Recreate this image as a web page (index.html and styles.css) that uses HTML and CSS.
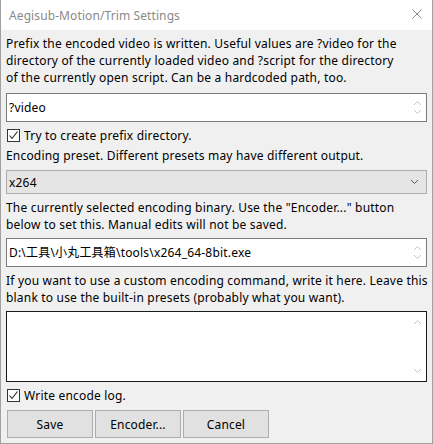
FILE: index.html
```html
<!DOCTYPE html>
<html>
<head>
<meta charset="utf-8">
<link rel="stylesheet" href="styles.css">
</head>
<body>
<div class="window">
  <div class="titlebar">
    <span class="title">Aegisub-Motion/Trim Settings</span>
    <svg class="close" width="10" height="10" viewBox="0 0 10 10"><path d="M0.5 0.5L9.5 9.5M9.5 0.5L0.5 9.5" stroke="#8a8a8a" stroke-width="1" fill="none"/></svg>
  </div>
  <div class="content">
    <p class="label l1">Prefix the encoded video is written. Useful values are ?video for the<br>directory of the currently loaded video and ?script for the directory<br>of the currently open script. Can be a hardcoded path, too.</p>
    <div class="textbox tb1">
      <span class="tbtext">?video</span>
      <div class="spin">
        <svg width="9" height="6" viewBox="0 0 9 6"><path d="M1 5L4.5 1.5L8 5" stroke="#c4c4c4" fill="none"/></svg>
        <svg width="9" height="6" viewBox="0 0 9 6"><path d="M1 1L4.5 4.5L8 1" stroke="#c4c4c4" fill="none"/></svg>
      </div>
    </div>
    <label class="check c1"><span class="box"><svg width="11" height="11" viewBox="0 0 11 11"><path d="M1.5 5.5L4 8.5L9.5 1.5" stroke="#222" stroke-width="1.1" fill="none"/></svg></span>Try to create prefix directory.</label>
    <p class="label l2">Encoding preset. Different presets may have different output.</p>
    <div class="combo">
      <span class="tbtext">x264</span>
      <svg class="chev" width="9" height="6" viewBox="0 0 9 6"><path d="M1 1L4.5 4.5L8 1" stroke="#5a5a5a" fill="none"/></svg>
    </div>
    <p class="label l3">The currently selected encoding binary. Use the "Encoder..." button<br>below to set this. Manual edits will not be saved.</p>
    <div class="textbox tb2">
      <span class="tbtext">D:\工具\小丸工具箱\tools\x264_64-8bit.exe</span>
      <div class="spin">
        <svg width="9" height="6" viewBox="0 0 9 6"><path d="M1 5L4.5 1.5L8 5" stroke="#c4c4c4" fill="none"/></svg>
        <svg width="9" height="6" viewBox="0 0 9 6"><path d="M1 1L4.5 4.5L8 1" stroke="#c4c4c4" fill="none"/></svg>
      </div>
    </div>
    <p class="label l4">If you want to use a custom encoding command, write it here. Leave this<br>blank to use the built-in presets (probably what you want).</p>
    <div class="textbox tb3">
      <div class="spin tall">
        <svg width="9" height="6" viewBox="0 0 9 6"><path d="M1 5L4.5 1.5L8 5" stroke="#c4c4c4" fill="none"/></svg>
        <svg width="9" height="6" viewBox="0 0 9 6"><path d="M1 1L4.5 4.5L8 1" stroke="#c4c4c4" fill="none"/></svg>
      </div>
    </div>
    <label class="check c2"><span class="box"><svg width="11" height="11" viewBox="0 0 11 11"><path d="M1.5 5.5L4 8.5L9.5 1.5" stroke="#222" stroke-width="1.1" fill="none"/></svg></span>Write encode log.</label>
    <div class="buttons">
      <button class="btn">Save</button>
      <button class="btn">Encoder...</button>
      <button class="btn">Cancel</button>
    </div>
  </div>
</div>
</body>
</html>
```
FILE: styles.css
```css
html, body {
  margin: 0;
  padding: 0;
  background: #f0f0f0;
}
.window {
  width: 433px;
  height: 444px;
  box-sizing: border-box;
  border: 1px solid #a0a0a0;
  border-top: none;
  background: #f0f0f0;
  display: flex;
  flex-direction: column;
  font-family: "Noto Sans", "Noto Sans CJK SC", sans-serif;
  font-size: 12px;
  letter-spacing: 0.19px;
  color: #000;
}
.titlebar {
  height: 30px;
  background: #fff;
  display: flex;
  align-items: center;
  justify-content: space-between;
  padding: 0 10px 0 8px;
  flex-shrink: 0;
}
.title {
  color: #8a8a8a;
  font-size: 12px;
  letter-spacing: 0.1px;
}
.close {
  margin-top: -2px;
}
.content {
  padding: 5px 5px 0 5px;
  display: flex;
  flex-direction: column;
}
.label {
  margin: 0;
  line-height: 17px;
  white-space: nowrap;
}
.textbox {
  box-sizing: border-box;
  background: #fff;
  border: 1px solid #7a7a7a;
  display: flex;
  align-items: center;
  justify-content: space-between;
  padding-left: 2px;
}
.tb1 { height: 29px; margin-top: 7px; }
.tb2 { height: 29px; margin-top: 5px; }
.tb3 { height: 71px; margin-top: 5px; border-color: #1a1a1a; justify-content: flex-end; }
.spin {
  width: 17px;
  align-self: stretch;
  display: flex;
  flex-direction: column;
  align-items: center;
  justify-content: space-between;
  padding: 6px 0;
  box-sizing: border-box;
}
.spin.tall { padding: 7px 0; }
.tbtext {
  line-height: 17px;
}
.check {
  display: flex;
  align-items: center;
  height: 17px;
  margin-top: 5px;
}
.box {
  width: 13px;
  height: 13px;
  box-sizing: border-box;
  border: 1px solid #333;
  background: #fff;
  display: flex;
  align-items: center;
  justify-content: center;
  margin: 0 4px 0 1px;
}
.l2 { margin-top: 3px; }
.combo {
  box-sizing: border-box;
  height: 24px;
  margin-top: 6px;
  background: #e5e5e5;
  border: 1px solid #adadad;
  display: flex;
  align-items: center;
  justify-content: space-between;
  padding: 0 7px 0 2px;
}
.l3 { margin-top: 5px; }
.l4 { margin-top: 5px; }
.c2 { margin-top: 5px; }
.buttons {
  display: flex;
  gap: 2px;
  margin-top: 6px;
  padding-left: 1px;
}
.btn {
  width: 86px;
  height: 28px;
  box-sizing: border-box;
  background: #e1e1e1;
  border: 1px solid #adadad;
  font-family: "Noto Sans", sans-serif;
  font-size: 12px;
  letter-spacing: 0.15px;
  color: #000;
  padding: 0;
  margin: 0;
}
```
